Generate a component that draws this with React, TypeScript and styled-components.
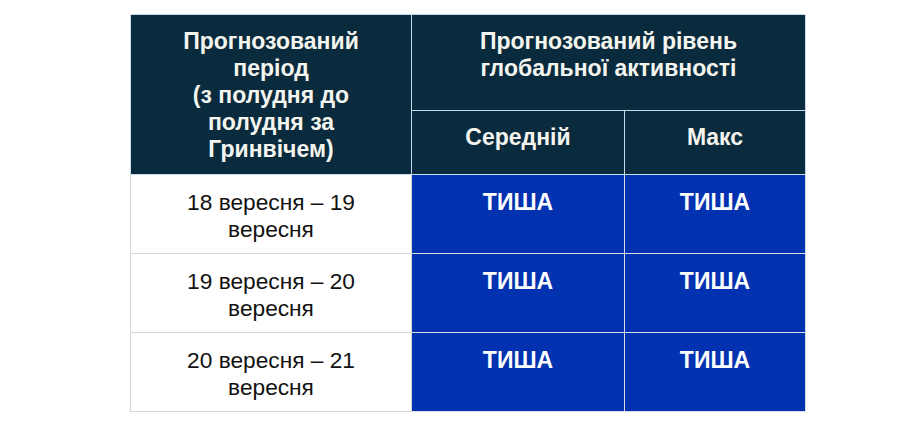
import React from "react";
import styled, { createGlobalStyle } from "styled-components";

const Global = createGlobalStyle`
  html, body { margin: 0; padding: 0; background: #ffffff; }
  body { font-family: "Liberation Sans", Arial, sans-serif; }
`;

const Page = styled.div`
  padding: 14px 0 0 130px;
`;

const Table = styled.table`
  border-collapse: collapse;
  width: 675px;
  table-layout: fixed;
  border: 1px solid #a4a4a4;
  font-family: "Liberation Sans", Arial, sans-serif;
  line-height: 27px;
`;

const Head = styled.th<{ $h: number }>`
  background: #0a2b3d;
  color: #f5f5f0;
  font-weight: bold;
  font-size: 23px;
  text-align: center;
  vertical-align: top;
  height: ${(p) => p.$h}px;
  padding: 13px 6px 0;
  box-sizing: border-box;
  border: 1px solid #c6dbec;
`;

const Period = styled.td`
  background: #ffffff;
  color: #111111;
  font-size: 22.7px;
  text-align: center;
  vertical-align: top;
  height: 79px;
  padding: 14px 6px 0;
  box-sizing: border-box;
  border: 1px solid #d6d6d6;
`;

const Level = styled.td`
  background: #0232b0;
  color: #ffffff;
  font-weight: bold;
  font-size: 23px;
  text-align: center;
  vertical-align: top;
  height: 79px;
  padding: 14px 6px 0;
  box-sizing: border-box;
  border: 1px solid #d8dde8;
`;

const rows = [
  ["18 вересня – 19", "вересня"],
  ["19 вересня – 20", "вересня"],
  ["20 вересня – 21", "вересня"],
];

export default function App() {
  return (
    <>
      <Global />
      <Page>
        <Table>
          <colgroup>
            <col style={{ width: 281 }} />
            <col style={{ width: 213 }} />
            <col style={{ width: 181 }} />
          </colgroup>
          <thead>
            <tr>
              <Head $h={96} rowSpan={2}>
                Прогнозований
                <br />
                період
                <br />
                (з полудня до
                <br />
                полудня за
                <br />
                Гринвічем)
              </Head>
              <Head $h={96} colSpan={2}>
                Прогнозований рівень
                <br />
                глобальної активності
              </Head>
            </tr>
            <tr>
              <Head $h={64}>Середній</Head>
              <Head $h={64}>Макс</Head>
            </tr>
          </thead>
          <tbody>
            {rows.map((r, i) => (
              <tr key={i}>
                <Period>
                  {r[0]}
                  <br />
                  {r[1]}
                </Period>
                <Level>ТИША</Level>
                <Level>ТИША</Level>
              </tr>
            ))}
          </tbody>
        </Table>
      </Page>
    </>
  );
}
